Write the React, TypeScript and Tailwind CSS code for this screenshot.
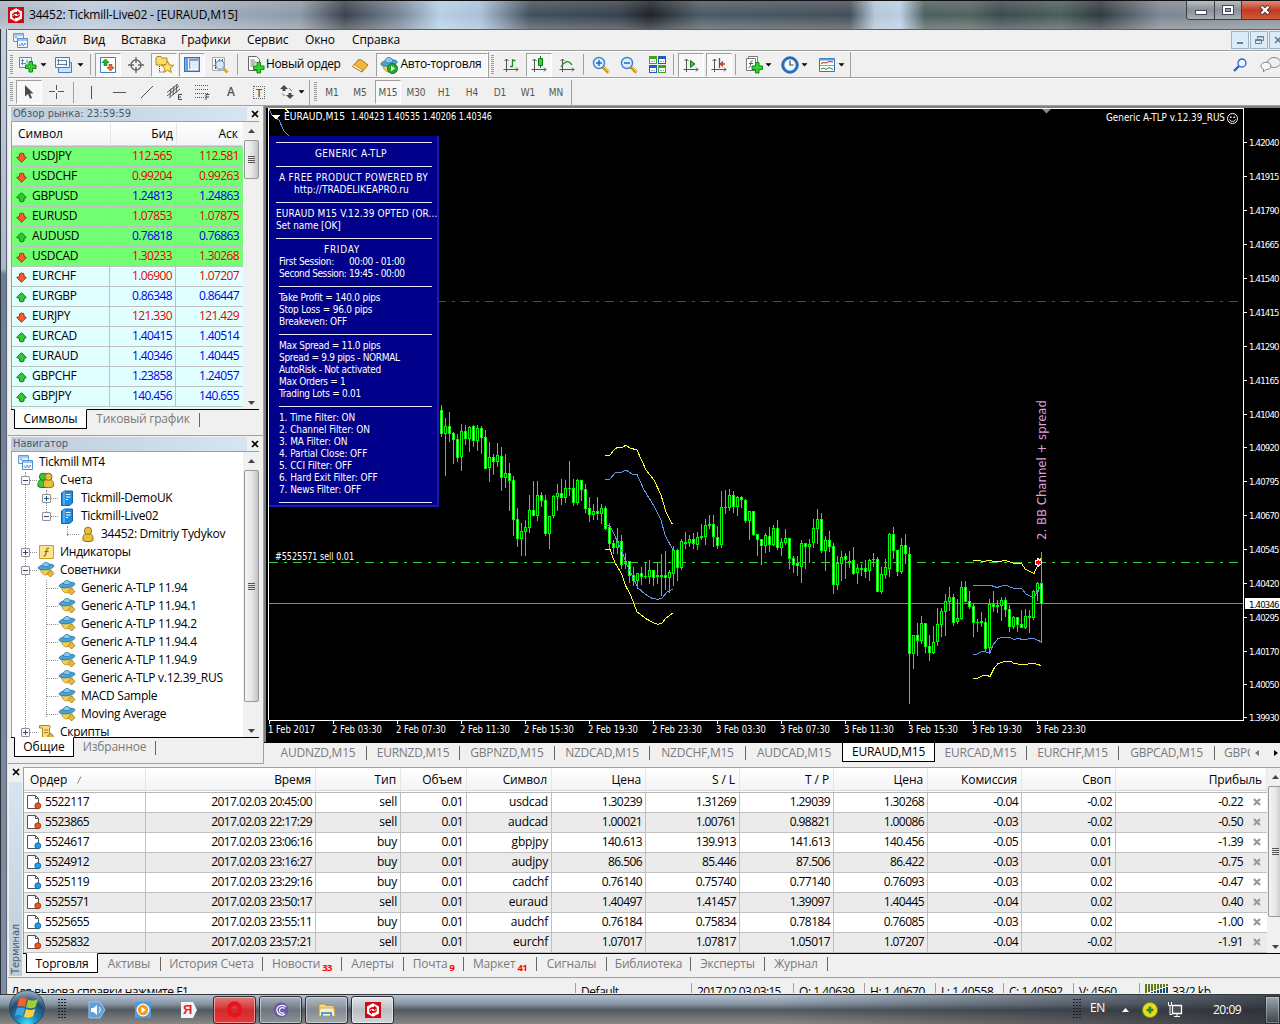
import type { ReactNode } from 'react';
import clsx from 'clsx';

/* ---------- data ---------- */

const quotes: [string, 'up' | 'down', string, string][] = [
  ['USDJPY', 'down', '112.565', '112.581'],
  ['USDCHF', 'down', '0.99204', '0.99263'],
  ['GBPUSD', 'up', '1.24813', '1.24863'],
  ['EURUSD', 'down', '1.07853', '1.07875'],
  ['AUDUSD', 'up', '0.76818', '0.76863'],
  ['USDCAD', 'down', '1.30233', '1.30268'],
  ['EURCHF', 'down', '1.06900', '1.07207'],
  ['EURGBP', 'up', '0.86348', '0.86447'],
  ['EURJPY', 'down', '121.330', '121.429'],
  ['EURCAD', 'up', '1.40415', '1.40514'],
  ['EURAUD', 'up', '1.40346', '1.40445'],
  ['GBPCHF', 'up', '1.23858', '1.24057'],
  ['GBPJPY', 'up', '140.456', '140.655'],
];

const orders = [
  ['5522117', '2017.02.03 20:45:00', 'sell', '0.01', 'usdcad', '1.30239', '1.31269', '1.29039', '1.30268', '-0.04', '-0.02', '-0.22'],
  ['5523865', '2017.02.03 22:17:29', 'sell', '0.01', 'audcad', '1.00021', '1.00761', '0.98821', '1.00086', '-0.03', '-0.02', '-0.50'],
  ['5524617', '2017.02.03 23:06:16', 'buy', '0.01', 'gbpjpy', '140.613', '139.913', '141.613', '140.456', '-0.05', '0.01', '-1.39'],
  ['5524912', '2017.02.03 23:16:27', 'buy', '0.01', 'audjpy', '86.506', '85.446', '87.506', '86.422', '-0.03', '0.01', '-0.75'],
  ['5525119', '2017.02.03 23:29:16', 'buy', '0.01', 'cadchf', '0.76140', '0.75740', '0.77140', '0.76093', '-0.03', '0.02', '-0.47'],
  ['5525571', '2017.02.03 23:50:17', 'sell', '0.01', 'euraud', '1.40497', '1.41457', '1.39097', '1.40445', '-0.04', '0.02', '0.40'],
  ['5525655', '2017.02.03 23:55:11', 'buy', '0.01', 'audchf', '0.76184', '0.75834', '0.78184', '0.76085', '-0.03', '0.02', '-1.00'],
  ['5525832', '2017.02.03 23:57:21', 'sell', '0.01', 'eurchf', '1.07017', '1.07817', '1.05017', '1.07207', '-0.04', '-0.02', '-1.91'],
];

const orderCols = ['Ордер', 'Время', 'Тип', 'Объем', 'Символ', 'Цена', 'S / L', 'T / P', 'Цена', 'Комиссия', 'Своп', 'Прибыль'];
const orderGrid = 'grid grid-cols-[122px_170px_85px_66px_85px_94px_94px_94px_94px_94px_94px_151px]';

// [high, open, close, low] in thirds of a pixel below the block's y0
const blocks: { x: number; y0: number; bars: number[][] }[] = [
  {
    x: 441,
    y0: 390,
    bars: [
      [45, 60, 132, 141], [84, 132, 108, 258], [66, 108, 132, 156], [126, 129, 150, 222], [132, 147, 204, 216],
      [102, 201, 123, 243], [105, 123, 147, 165], [108, 147, 111, 186], [105, 108, 153, 171], [105, 153, 114, 183],
      [108, 114, 144, 192], [120, 141, 237, 237], [156, 234, 201, 276], [192, 201, 216, 255], [159, 216, 195, 231],
      [171, 198, 264, 303], [192, 264, 249, 294], [219, 249, 273, 363], [258, 270, 390, 438], [354, 387, 447, 471],
      [399, 447, 423, 498], [390, 426, 411, 498], [315, 414, 360, 429], [273, 360, 378, 378], [273, 378, 315, 393],
      [306, 315, 333, 351], [315, 330, 432, 438], [378, 432, 378, 477], [315, 378, 318, 384], [282, 321, 309, 363],
      [267, 309, 324, 345], [270, 324, 294, 339], [213, 294, 297, 318], [267, 294, 339, 348], [267, 339, 270, 345],
      [270, 270, 300, 333], [282, 297, 357, 369], [321, 354, 375, 396], [342, 375, 363, 390], [321, 363, 372, 390],
      [342, 372, 354, 402], [348, 354, 417, 420], [399, 411, 462, 480], [450, 459, 474, 492], [414, 474, 453, 492],
      [435, 453, 525, 537], [489, 522, 513, 537], [513, 513, 558, 579], [531, 555, 573, 588], [549, 573, 549, 597],
      [531, 549, 561, 585], [516, 558, 561, 567], [510, 561, 540, 582], [540, 540, 564, 588], [519, 555, 561, 582],
      [492, 555, 561, 618], [483, 555, 564, 600], [540, 564, 546, 609], [468, 552, 480, 588], [477, 480, 534, 573],
    ],
  },
  {
    x: 681,
    y0: 460,
    bars: [
      [237, 324, 243, 330], [216, 246, 252, 267], [225, 249, 237, 261], [219, 237, 252, 267], [216, 255, 231, 270],
      [192, 228, 234, 240], [177, 231, 195, 255], [165, 192, 198, 207], [165, 192, 231, 261], [198, 231, 258, 267],
      [93, 255, 141, 264], [90, 141, 144, 162], [87, 144, 105, 153], [93, 105, 141, 159], [108, 141, 111, 168],
      [108, 111, 120, 144], [117, 120, 183, 189], [153, 183, 153, 240], [153, 153, 225, 228], [222, 222, 240, 288],
      [237, 237, 258, 315], [219, 258, 225, 279], [201, 228, 255, 276], [195, 255, 204, 258], [180, 204, 264, 270],
      [234, 264, 246, 288], [207, 249, 234, 255], [234, 234, 297, 327], [288, 294, 315, 339], [288, 309, 318, 348],
      [240, 321, 249, 369], [249, 249, 261, 327], [237, 261, 252, 309], [177, 249, 204, 264], [147, 207, 177, 252],
      [159, 177, 273, 279], [228, 273, 240, 333], [213, 240, 261, 276], [249, 258, 375, 402], [288, 375, 309, 390],
      [273, 312, 291, 363], [279, 288, 300, 357], [273, 303, 309, 324], [261, 300, 342, 345], [312, 339, 324, 372],
      [312, 324, 330, 348], [300, 324, 336, 354], [297, 333, 300, 363], [279, 297, 300, 321], [291, 297, 396, 396],
      [321, 396, 342, 402], [297, 345, 321, 357], [219, 327, 222, 351], [201, 222, 273, 297], [270, 270, 336, 348],
      [234, 336, 255, 342], [222, 255, 282, 312], [261, 282, 582, 732],
    ],
  },
  {
    x: 913,
    y0: 380,
    bars: [
      [765, 822, 765, 867], [729, 765, 783, 828], [708, 783, 729, 792], [729, 729, 801, 819], [765, 798, 819, 843],
      [738, 819, 786, 822], [684, 786, 732, 798], [684, 735, 693, 771], [642, 696, 663, 768], [621, 666, 651, 693],
      [642, 651, 729, 738], [657, 726, 714, 732], [603, 717, 621, 720], [603, 621, 666, 666], [633, 663, 681, 687],
      [669, 678, 729, 771], [717, 726, 729, 756], [696, 723, 729, 741], [714, 726, 807, 813], [657, 804, 672, 822],
      [633, 672, 681, 696], [660, 675, 681, 699], [651, 678, 660, 723], [651, 660, 690, 711], [675, 687, 741, 756],
      [708, 741, 711, 747], [711, 711, 735, 756], [690, 732, 744, 744], [687, 744, 708, 747], [690, 708, 714, 759],
      [630, 714, 633, 720], [606, 636, 609, 663], [516, 609, 672, 789],
    ],
  },
];

const bands = [
  ['#ffff33', '605,455 610,455 614,450 618,447 622,448 626,445 630,448 637,450 646,470 654,480 661,495 666,512 672.5,524.5'],
  ['#6495ed', '605,479 610,479 615,473 622,472 626,470 632,474 637,474.500 644,490 654,506 661,520 665,535 673,550'],
  ['#6495ed', '605,525.500 610,526 617,540.500 621.500,550.500 626.500,564 632,575 638,588 645,594 651.500,598 658,599.500 662,598 667,592 673,589'],
  ['#ffff33', '605,549 610,549.500 615,563 621.500,573.500 626,586.500 631,596 637,612 646.500,619 654,623 658,624.500 662,623 666,618 673,613'],
  ['#ffff33', '973,560.500 980,560.500 982,561.500 990,560.500 997,562 1005,560.500 1013,563 1022,564 1025,569 1034,573.500 1037,567 1041,558'],
  ['#6495ed', '973,585.500 991,585.500 997,587.500 1005,585 1013,588 1022,589 1026,594 1034,598 1037,592 1041,586'],
  ['#6495ed', '973,654.500 977,654 982,651.500 990,652.500 993,645 998,638.500 1002,637.500 1010,637.500 1014,639.500 1018,638.500 1023,639.500 1034,638.500 1038,640.500 1041,641.500'],
  ['#ffff33', '973,678.500 977,678.500 982,676 987,675.500 990,676.500 994,668.500 998,663.500 1005,661.500 1011,661.500 1014,663.500 1022,664.500 1034,663.500 1038,664.500 1041,665.500'],
  ['#6495ed', '269,109 272,115 279,120 284,131 289,136'],
  ['#ffff33', '285,109 289,112'],
];

const prices: [string, number][] = [
  ['1.42040', 142], ['1.41915', 176], ['1.41790', 210], ['1.41665', 244], ['1.41540', 278], ['1.41415', 312],
  ['1.41290', 346], ['1.41165', 380], ['1.41040', 414], ['1.40920', 447], ['1.40795', 481], ['1.40670', 515],
  ['1.40545', 549], ['1.40420', 583], ['1.40295', 617], ['1.40170', 651], ['1.40050', 684], ['1.39930', 717],
];

const times = [
  '1 Feb 2017', '2 Feb 03:30', '2 Feb 07:30', '2 Feb 11:30', '2 Feb 15:30', '2 Feb 19:30', '2 Feb 23:30',
  '3 Feb 03:30', '3 Feb 07:30', '3 Feb 11:30', '3 Feb 15:30', '3 Feb 19:30', '3 Feb 23:30',
];

/* ---------- small pieces ---------- */

function Svg({ w = 18, h = 18, children, className }: { w?: number; h?: number; children: ReactNode; className?: string }) {
  return (
    <svg width={w} height={h} viewBox={`0 0 ${w} ${h}`} className={clsx('shrink-0', className)} fill="none">
      {children}
    </svg>
  );
}

const Plus = ({ x, y }: { x: number; y: number }) => (
  <path
    transform={`translate(${x} ${y})`}
    d="M4 .5h3.500v3.500h3.500v3.500h-3.500v3.500H4V7.500H.5V4H4z"
    fill="#2fd62f"
    stroke="#0a8a12"
  />
);

const Axes = () => <path d="M4.500 3v13M1.500 13.500H16M2.500 5l2-2 2 2M14 11.500l2 2-2 2" stroke="#555" />;

const ExpertHat = () => (
  <Svg>
    <path d="M3 9c0 4 2.500 7 6 7s5-2 6-6z" fill="#f2cf52" stroke="#b78b1c" strokeWidth=".8" />
    <ellipse cx="9" cy="7" rx="8.300" ry="3" transform="rotate(-8 9 7)" fill="#4aa3d8" stroke="#2b78ab" strokeWidth=".8" />
    <path d="M5 6c0-3 1.500-4.500 4-4.500S12.500 3 13 5.500C11 7 7 7.500 5 6z" fill="#86cbee" stroke="#2b78ab" strokeWidth=".8" />
  </Svg>
);

const ExpertIcon = () => (
  <Svg>
    <path d="M3.500 8c0 3 2.500 6 5 6s5-2 6-5z" fill="#f2cf52" stroke="#b78b1c" strokeWidth=".8" />
    <ellipse cx="9" cy="6" rx="8" ry="2.700" transform="rotate(-8 9 6)" fill="#4aa3d8" stroke="#2b78ab" strokeWidth=".8" />
    <path d="M5.500 5c0-2.500 1.500-3.500 3.500-3.500S12 2.500 12.500 4.500C11 6 7 6 5.500 5z" fill="#86cbee" stroke="#2b78ab" strokeWidth=".8" />
    <path d="M13.500 9l3.500 3.500-3.500 3.500-3.500-3.500z" fill="#e7b93a" stroke="#9a7315" strokeWidth=".8" />
  </Svg>
);

const ChartsIcon = () => (
  <Svg w={15} h={15}>
    <path d="M.5.5h10v8H.5z" fill="#e9f3fd" stroke="#5b9bdc" />
    <path d="M.5 2h10" stroke="#5b9bdc" />
    <path d="M4.500 5.500h10v9h-10z" fill="#f4f9ff" stroke="#4a8ed6" />
    <path d="M4.500 7h10" stroke="#4a8ed6" />
    <path d="M6 11l1.500 2 1.500-3 1.500 3L12 10l1 1.500M2 5l1-1.500L4 5" stroke="#4a8ed6" strokeWidth=".9" />
  </Svg>
);

// white hexagon with two opposed arrows cut out of it
const BrandIcon = () => (
  <Svg w={16} h={16}>
    <path d="M0 0h16v16H0z" fill="#cf0a14" />
    <path d="M8 1.200l6 3.400v6.800l-6 3.400-6-3.400V4.600z" fill="#fff" />
    <path d="M3.800 9.300C3.600 6.300 5.800 4.700 9 5V3.300l3.200 2.900L9 8.500V7.200C6.800 6.900 5.300 7.400 3.800 9.300z" fill="#cf0a14" />
    <path d="M12.200 6.700c.2 3-2 4.600-5.200 4.300v1.700L3.800 9.800 7 7.500v1.300c2.200.3 3.700-.2 5.200-2.100z" fill="#cf0a14" />
  </Svg>
);

const Drop = ({ className = 'ml-[3px]' }: { className?: string }) => (
  <Svg w={7} h={4} className={className}>
    <path d="M.5.300h6L3.500 3.500z" fill="#000" />
  </Svg>
);

const Grip = () => (
  <div className="h-5 w-[3px] mx-0.5 shrink-0 bg-[repeating-linear-gradient(#9a9a9a_0_1px,#f0f0f0_1px_2px)]" />
);

const Sep = ({ className = 'mx-[3px]' }: { className?: string }) => (
  <div className={clsx('h-[21px] w-px shrink-0 bg-[#a0a0a0]', className)} />
);

function Tool({ children, pressed, className = 'w-[26px]' }: { children?: ReactNode; pressed?: boolean; className?: string }) {
  return (
    <div
      className={clsx(
        'h-6 shrink-0 flex items-center justify-center',
        pressed && 'border border-[#a0a0a0] border-r-white border-b-white bg-[#f7f7f7]',
        className,
      )}
    >
      {children}
    </div>
  );
}

const CloseX = ({ color = '#000', weight = 1.7 }: { color?: string; weight?: number }) => (
  <Svg w={8} h={8}>
    <path d="M1 1l6 6M7 1l-6 6" stroke={color} strokeWidth={weight} />
  </Svg>
);

const Arrow = ({ dir }: { dir: 'up' | 'down' }) => (
  <Svg w={11} h={11}>
    {dir === 'up' ? (
      <path d="M5.500.7L10.300 5.500 8 6.500v2.500L5.500 10 3.500 9V6.500L.7 5.500z" fill="#35c535" stroke="#0b7a16" />
    ) : (
      <path d="M5.500 10.300L.7 5.500 3.500 4.500V2L5.500 1 8 2v2.500l2.300 1z" fill="#ff5a2a" stroke="#a82a0a" />
    )}
  </Svg>
);

function Scrollbar({ thumb }: { thumb: string }) {
  return (
    <div className="w-4 shrink-0 flex flex-col items-center bg-[#f0f0f0]">
      <Svg w={7} h={4} className="mt-[7px]"><path d="M0 4l3.500-4L7 4z" fill="#444" /></Svg>
      <div className={clsx('w-[15px] mt-[7px] shrink-0 rounded-[2px] border border-[#979797] bg-linear-to-r from-[#f4f4f4] via-[#e6e6e8] to-[#c4c4c8] flex flex-col items-center justify-center gap-px', thumb)}>
        {[0, 1, 2, 3].map((i) => <div key={i} className="w-[7px] h-px bg-[#555]" />)}
      </div>
      <div className="flex-1" />
      <Svg w={7} h={4} className="mb-1"><path d="M0 0l3.500 4L7 0z" fill="#444" /></Svg>
    </div>
  );
}

function PanelHeader({ title }: { title: string }) {
  return (
    <div className="h-[14px] ml-[3px] mr-px flex items-center shrink-0">
      <div className="w-[236px] h-[14px] pl-0.5 text-[11px] leading-[13px] text-[#4a5a6b] font-['DejaVu_Sans_Condensed','DejaVu_Sans',sans-serif] bg-linear-to-r from-[#bfcddb] to-[#d7e4f2]">
        {title}
      </div>
      <div className="ml-1"><CloseX /></div>
    </div>
  );
}

/* ---------- window chrome ---------- */

function TitleBar() {
  return (
    <div className="relative h-[29px] shrink-0 flex items-center pl-2 border-t border-[#111] overflow-hidden bg-[linear-gradient(90deg,#a9b4c2_0,#bccbdd_90px,#a3b0bf_200px,#8c98a6_300px,#3b424b_345px,#788798_400px,#b5cfe6_440px,#a9c0d8_480px,#43505c_530px,#38424c_620px,#1d2329_650px,#4d5a63_700px,#454f58_850px,#b3c7d9_875px,#b9cee2_900px,#4d5f60_925px,#52635f_970px,#3d4a50_1000px,#4b5f5a_1060px,#303a40_1100px,#7d8791_1160px,#8a929a_1280px)]">
      <div className="absolute inset-0 bg-linear-to-b from-white/15 via-transparent to-white/25" />
      <div className="relative flex items-center gap-[5px]">
        <BrandIcon />
        <span className="text-[12px] text-black tracking-[-.18px]">34452: Tickmill-Live02 - [EURAUD,M15]</span>
      </div>
      <div className="absolute left-[1186px] top-0 flex h-[19px] w-[100px] rounded-bl-[4px] border border-t-0 border-[#3a3f46] overflow-hidden">
        <div className="w-[29px] border-r border-[#3a3f46] bg-linear-to-b from-[#b9bec4] via-[#8a9097] to-[#a9afb5] flex items-center justify-center">
          <div className="w-3 h-[5px] mt-1 bg-white border border-[#444a55]" />
        </div>
        <div className="w-[27px] border-r border-[#3a3f46] bg-linear-to-b from-[#b9bec4] via-[#8a9097] to-[#a9afb5] flex items-center justify-center">
          <div className="w-3 h-[10px] bg-white border border-[#444a55] flex items-center justify-center">
            <div className="w-[6px] h-1 border border-[#444a55] bg-[#9aa0a7]" />
          </div>
        </div>
        <div className="w-[44px] pl-[3px] bg-linear-to-b from-[#dd8a78] via-[#c23a20] to-[#cd5a3a] flex items-center justify-center">
          <Svg w={12} h={10}>
            <path d="M2 1l8 8M10 1l-8 8" stroke="#4a2a2a" strokeWidth="4" />
            <path d="M2.500 1.500l7 7M9.500 1.500l-7 7" stroke="#fff" strokeWidth="2.400" />
          </Svg>
        </div>
      </div>
    </div>
  );
}

function MenuBar() {
  const btn = 'w-[18px] h-[18px] border border-[#9db4c8] bg-[#dcebf8] flex items-center justify-center shrink-0';
  return (
    <div className="h-[21px] shrink-0 flex items-center bg-[#f0f0f0] border-b border-[#a0a0a0] text-[12px] tracking-[-.1px]">
      <div className="ml-[5px]"><ChartsIcon /></div>
      <div className="ml-2 w-[47px]">Файл</div>
      <div className="w-[38px]">Вид</div>
      <div className="w-[60px]">Вставка</div>
      <div className="w-[66px]">Графики</div>
      <div className="w-[58px]">Сервис</div>
      <div className="w-[47px]">Окно</div>
      <div className="w-[60px]">Справка</div>
      <div className="flex-1" />
      <div className="flex gap-px w-[49px] overflow-hidden">
        <div className={btn}><div className="w-[6px] h-0.5 mt-[6px] bg-[#6a7f94]" /></div>
        <div className={btn}>
          <Svg w={9} h={9}><path d="M2.500 2.500v-2h6v4h-2M.5 3.500h6v4h-6zM.5 4.500h6M2.500 1h6" stroke="#6a7f94" /></Svg>
        </div>
        <div className={btn}><CloseX color="#6a7f94" /></div>
      </div>
    </div>
  );
}

function MainToolbar() {
  return (
    <div className="h-[27px] shrink-0 flex items-center bg-[#f0f0f0] border-t border-t-white border-b border-b-[#a0a0a0]">
      <Grip />
      <Tool className="w-6 ml-px">
        <Svg>
          <path d="M.5 1.500h12v10H.5z" fill="#eef6ff" stroke="#4a8ed6" />
          <path d="M3.500 3v6M2 4.500h3M8 3.500v4M2 7.500h5" stroke="#6d89a5" />
          <Plus x={6} y={5} />
        </Svg>
      </Tool>
      <Drop className="ml-0" />
      <Tool className="w-6 ml-[5px]">
        <Svg>
          <path d="M3.500 6.500h13v10h-13z" fill="#cde2f6" stroke="#3f7fc4" />
          <path d="M.5 1.500h14v10H.5z" fill="#f4f9ff" stroke="#3f7fc4" />
          <path d="M3.500 3v6M2 4.500h10M2 8.500h10M11.500 4v6" stroke="#5a7c9e" />
        </Svg>
      </Tool>
      <Drop className="ml-[1px]" />
      <Sep className="ml-[6px] mr-1" />
      <div className="flex gap-0.5">
        <Tool pressed>
          <Svg w={16} h={16}>
            <path d="M.5.5h15v15H.5z" fill="#fff" stroke="#3f7fc4" />
            <path d="M5.500 2L9 5.500H7v3H4v-3H2z" fill="#2db52d" stroke="#0b7a16" strokeWidth=".7" />
            <path d="M10.500 14L7 10.500h2v-3h3v3h2z" fill="#ff6a3a" stroke="#a82a0a" strokeWidth=".7" />
          </Svg>
        </Tool>
        <Tool>
          <Svg w={16} h={16}><circle cx="8" cy="8" r="5" stroke="#666" strokeWidth="1.400" /><path d="M8 0v6M8 10v6M0 8h6M10 8h6" stroke="#666" strokeWidth="1.400" /></Svg>
        </Tool>
        <Tool pressed>
          <Svg w={19} h={19}>
            <path d="M1 3l1-1.500h4L7 3h5v7H1z" fill="#f8dc6a" stroke="#b08a20" />
            <path d="M4.500 11v6h4" stroke="#333" strokeDasharray="1 1" />
            <path d="M12.500 6l1.800 4 4.200.4-3.200 2.800 1 4.300-3.800-2.300-3.800 2.300 1-4.300L6.500 10.400l4.200-.4z" fill="#ffe27a" stroke="#b58412" />
          </Svg>
        </Tool>
        <Tool pressed>
          <Svg w={16} h={15}>
            <path d="M.7.7h14.600v13.600H.7z" fill="#fff" stroke="#2f74bd" strokeWidth="1.400" />
            <path d="M1.500 1.500h2.500v12H1.500z" fill="#5a9bdc" />
            <path d="M5 3h9M5 5h1.500M5 7h1.500M5 9h1.500M5 11h1.500" stroke="#223a7a" />
            <path d="M7.500 5H14M7.500 7H14M7.500 9H14M7.500 11H14" stroke="#c9d6e8" />
          </Svg>
        </Tool>
        <Tool>
          <Svg>
            <path d="M1.500 1.500h12v13h-12z" fill="#fafafa" stroke="#aaa" />
            <path d="M4.500 3v10M4.500 9.500H2.500M8.500 3v3M11.500 3v2" stroke="#456" />
            <circle cx="9" cy="9" r="4.300" fill="#cfe6f8cc" stroke="#6d9cc4" strokeWidth="1.300" />
            <path d="M12.500 12.500l4 4" stroke="#d8a32a" strokeWidth="2.800" />
          </Svg>
        </Tool>
      </div>
      <Sep className="ml-[4px] mr-[9px]" />
      <Svg>
        <path d="M1.500.5h8l3 3v11h-11z" fill="#fff" stroke="#666" />
        <path d="M3.500 4h4M3.500 6h6M3.500 8h5M3.500 10h3" stroke="#777" />
        <Plus x={6} y={6} />
      </Svg>
      <span className="ml-px w-[76px] text-[12px] -mt-0.5 whitespace-nowrap tracking-[-.35px]">Новый ордер</span>
      <Tool className="w-6 ml-[6px]">
        <Svg>
          <path d="M1.500 10.500l6-7 3 .5 6.500 5-6 7z" fill="#f0b93a" stroke="#a8741a" />
          <path d="M1.500 10.500l9.500 5.500V13.500L3 8.500z" fill="#fff2c8" stroke="#a8741a" strokeWidth=".7" />
        </Svg>
      </Tool>
      <Tool pressed className="w-[112px] ml-1 gap-[3px]">
        <div className="relative">
          <ExpertHat />
          <div className="absolute left-[7px] top-[7px]">
            <Svg w={11} h={11}><circle cx="5.500" cy="5.500" r="5" fill="#1fae2c" stroke="#0c7a18" /><path d="M4 2.800l4 2.700-4 2.700z" fill="#fff" /></Svg>
          </div>
        </div>
        <span className="w-[84px] text-[12px] -mt-0.5 whitespace-nowrap tracking-[-.25px]">Авто-торговля</span>
      </Tool>
      <div className="w-px h-[25px] bg-[#a0a0a0]" />
      <Grip />
      <div className="flex gap-0.5 ml-0.5">
        <Tool><Svg><Axes /><path d="M10.500 3v8M10.500 4.500h3M8 10.500h2.500" stroke="#1f8f2a" strokeWidth="1.300" /></Svg></Tool>
        <Tool pressed><Svg><Axes /><path d="M10.500 0v12" stroke="#0c7a18" /><path d="M8.500 2.500h4v7h-4z" fill="#2fd62f" stroke="#0c7a18" /></Svg></Tool>
        <Tool><Svg><Axes /><path d="M3 11c3-5 7-8 11-2" stroke="#1f8f2a" strokeWidth="1.300" /></Svg></Tool>
      </div>
      <Sep className="ml-[3px] mr-[4px]" />
      <div className="flex gap-0.5">
        {['in', 'out'].map((kind) => (
          <Tool key={kind}>
            <Svg>
              <path d="M11 11l5.500 5.500" stroke="#c99a22" strokeWidth="3.200" />
              <path d="M11.500 10.500l5.500 5.500" stroke="#f5dc7a" strokeWidth="1" />
              <circle cx="7" cy="7" r="5.500" fill="#dbeeff" stroke="#3b7fce" strokeWidth="1.400" />
              <path d={kind === 'in' ? 'M4 7h6M7 4v6' : 'M4 7h6'} stroke="#2568b8" strokeWidth="1.500" />
            </Svg>
          </Tool>
        ))}
        <Tool>
          <Svg w={17} h={17}>
            <path d="M0 0h8v8H0zM9 9h8v8H9z" fill="#3aa81a" />
            <path d="M9 0h8v8H9zM0 9h8v8H0z" fill="#2358c8" />
            <path d="M1 3h6v4H1zM10 3h6v4h-6zM1 12h6v4H1zM10 12h6v4h-6z" fill="#fff" />
            <path d="M2 5.500h4M11 5.500h4M2 14.500h4M11 14.500h4" stroke="#99a" strokeDasharray="2 1" />
          </Svg>
        </Tool>
      </div>
      <Sep className="ml-[3px] mr-1" />
      <div className="flex gap-0.5">
        <Tool pressed><Svg><Axes /><path d="M8.500 4.500v7L13 8z" fill="#2fc43a" stroke="#0c7a18" /></Svg></Tool>
        <Tool pressed><Svg><Axes /><path d="M9.500 2v10" stroke="#1a5fa8" strokeWidth="1.300" /><path d="M15 8h-4M13 5.500L10.500 8l2.500 2.500" stroke="#c23a10" strokeWidth="1.300" /></Svg></Tool>
      </div>
      <Sep className="ml-[3px] mr-[9px]" />
      <Svg>
        <path d="M3.500.5h9v13h-9z" fill="#fff" stroke="#777" />
        <path d="M1.500 2.500h9v12h-9z" fill="#fff" stroke="#777" />
        <path d="M8 5c-2-1-2 1-2.300 3S5 12 3.500 11.500M4 7.500h4" stroke="#555" />
        <Plus x={6.500} y={6} />
      </Svg>
      <Drop className="ml-0.5" />
      <Svg className="ml-[9px]">
        <circle cx="9" cy="9" r="7" fill="#f6fbff" stroke="#2374c8" strokeWidth="2.600" />
        <circle cx="9" cy="9" r="8.300" stroke="#174f8f" strokeWidth=".7" />
        <path d="M9 4.500V9h3.500" stroke="#444" strokeWidth="1.200" />
      </Svg>
      <Drop className="ml-0.5" />
      <Svg className="ml-[10px]">
        <path d="M1.500 2.500h15v13h-15z" fill="#fff" stroke="#2f74bd" />
        <path d="M1.500 3.500h15" stroke="#5a9bdc" strokeWidth="2" />
        <path d="M2 9.500h14" stroke="#7aa9d8" />
        <path d="M3 7.500l3-1 2 .5 3-1.500 4 .5" stroke="#a82a0a" />
        <path d="M3 13l3-1 2 1.500 3-2 4 2" stroke="#1f8f2a" />
      </Svg>
      <Drop className="ml-0.5" />
      <div className="w-px h-[25px] bg-[#a0a0a0] ml-[5px]" />
      <div className="flex-1" />
      <Svg w={14} h={14}>
        <circle cx="9" cy="5" r="4" fill="#eef5ff" stroke="#2b62d0" strokeWidth="1.300" />
        <path d="M6 8l-5 5" stroke="#2b62d0" strokeWidth="2.400" />
      </Svg>
      <Svg w={20} h={18} className="ml-[13px]">
        <ellipse cx="14" cy="6.500" rx="6.500" ry="5" fill="#eee" stroke="#888" />
        <path d="M1 10c0-5 10-5 10 0 0 3-3 3.500-5 3.500L3.500 16v-3C2 12.500 1 11.500 1 10z" fill="#f7f7f7" stroke="#888" />
      </Svg>
    </div>
  );
}

function LineToolbar() {
  return (
    <div className="h-[28px] shrink-0 flex items-center bg-[#f0f0f0] border-t border-t-white border-b border-b-[#a0a0a0] text-[#555]">
      <Grip />
      <Tool pressed className="w-[26px] ml-px"><Svg w={14} h={16}><path d="M3 1l8.500 8.500H8l2 4.500-2 .8-2-4.800L3 12.500z" fill="#4a4a4a" /></Svg></Tool>
      <Tool className="w-[26px] ml-0.5"><Svg w={16} h={16}><path d="M7.500 1v5M7.500 9v6M0 7.500h6M9 7.500h6" stroke="#555" /></Svg></Tool>
      <Sep className="ml-[3px] mr-[4px]" />
      <div className="flex gap-0.5">
        <Tool><div className="w-px h-[13px] bg-[#555]" /></Tool>
        <Tool><div className="w-[13px] h-px bg-[#555]" /></Tool>
        <Tool><Svg w={14} h={14}><path d="M1 13L13 1" stroke="#555" /></Svg></Tool>
        <Tool>
          <Svg>
            <path d="M1 13L13 3M1 9.500L12 1M3 15l11-9M5 5.500l-1 8M8 3L7 12M11 1l-1 9" stroke="#555" />
            <path d="M16 11.500h-3.500v5H16M12.500 14H15" stroke="#444" />
          </Svg>
        </Tool>
        <Tool>
          <Svg>
            <path d="M1 2.500h14M1 6.500h14M1 10.500h14M1 14.500h9" stroke="#555" strokeDasharray="1 1" />
            <path d="M15.500 11.500H12v5.500M12 14h3" stroke="#444" />
          </Svg>
        </Tool>
        <Tool><span className="text-[12px] font-semibold">A</span></Tool>
        <Tool><div className="w-3 h-[13px] border border-dotted border-[#666] text-[11px] leading-[11px] font-semibold text-center">T</div></Tool>
        <Tool>
          <Svg w={14} h={14}>
            <path d="M4 0l4 4H5.500v2h-3V4H0zM10 14l-4-4h2.500V8h3v2H14z" fill="#4a4a4a" />
            <path d="M2.500 8.500l2 2.500M9 3l3 3" stroke="#777" />
          </Svg>
        </Tool>
      </div>
      <Drop className="-ml-0.5" />
      <div className="w-px h-[25px] bg-[#a0a0a0] ml-1 mr-[2px]" />
      <Grip />
      <div className="flex gap-0.5 text-[10px] font-['DejaVu_Sans_Condensed','DejaVu_Sans',sans-serif] tracking-[-.1px]">
        {['M1', 'M5', 'M15', 'M30', 'H1', 'H4', 'D1', 'W1', 'MN'].map((tf) => (
          <Tool key={tf} pressed={tf === 'M15'}>{tf}</Tool>
        ))}
      </div>
      <div className="w-px h-[25px] bg-[#a0a0a0] ml-0.5" />
    </div>
  );
}

/* ---------- left panels ---------- */

function PanelTabs({ active, other, aw, ow }: { active: string; other: string; aw: string; ow: string }) {
  return (
    <div className="h-[20px] ml-[3px] mr-1 flex border-t border-black shrink-0 text-[12px] leading-[18px]">
      <div className={clsx('ml-[3px] -mt-px h-[20px] bg-white border border-black border-t-white text-center', aw)}>{active}</div>
      <div className={clsx('text-[#7a7a7a] text-center tracking-[-.2px]', ow)}>{other}</div>
      <div className="w-px h-[14px] mt-[3px] bg-[#666]" />
    </div>
  );
}

function MarketWatch() {
  return (
    <div className="h-[330px] shrink-0 flex flex-col border-b border-[#a0a0a0] pt-px">
      <PanelHeader title="Обзор рынка: 23:59:59" />
      <div className="h-[288px] ml-[3px] mr-1 flex border-t border-l border-[#a0a0a0] overflow-hidden bg-white">
        <div className="w-[232px] text-[12px]">
          <div className="h-[24px] grid grid-cols-[98px_66px_67px] items-center bg-linear-to-b from-white to-[#f3f4f6] border-b border-[#d5d5d5]">
            <div className="pl-[6px]">Символ</div>
            <div className="text-right pr-[3px] border-l border-[#e4e6e8] leading-[22px]">Бид</div>
            <div className="text-right pr-[5px] border-l border-[#e4e6e8] leading-[22px]">Аск</div>
          </div>
          <div className="h-px bg-[#b8b8b8] mr-px" />
          {quotes.map(([symbol, dir, bid, ask], i) => (
            <div
              key={symbol}
              className={clsx(
                'h-5 w-[231px] grid grid-cols-[98px_66px_67px] border-b border-[#c0c0c0] leading-[18px]',
                i < 6 ? 'bg-[#73ff73]' : 'bg-[#e0ffff]',
              )}
            >
              <div className="flex items-start gap-[5px] pl-1 border-r border-[#c0c0c0] tracking-[-.3px]">
                <div className="pt-[5px]"><Arrow dir={dir} /></div>
                {symbol}
              </div>
              {[bid, ask].map((v, k) => (
                <div
                  key={k}
                  className={clsx(
                    'text-right tracking-[-.6px]',
                    k === 0 ? 'border-r border-[#c0c0c0] pr-[3px]' : 'pr-1',
                    dir === 'up' ? 'text-[#0000e6]' : 'text-[#e60000]',
                  )}
                >
                  {v}
                </div>
              ))}
            </div>
          ))}
          <div className="h-1 w-[231px] bg-[#e0ffff]" />
        </div>
        <Scrollbar thumb="h-[39px]" />
      </div>
      <PanelTabs active="Символы" other="Тиковый график" aw="w-[73px]" ow="w-[112px]" />
    </div>
  );
}

const Person = ({ x = 0, fill = '#e8bf3a', edge = '#92700f' }: { x?: number; fill?: string; edge?: string }) => (
  <g transform={`translate(${x} 0)`} fill={fill} stroke={edge}>
    <path d="M1 14.500c-.5-4 1-7 3-7h3.500c2.500 0 4 3 3.500 7-2 1.500-8 1.500-10 0z" />
    <circle cx="6" cy="4.800" r="3.600" />
  </g>
);

const ServerIcon = () => (
  <Svg w={16} h={16}>
    <path d="M2.500 3l3-2h8v12l-3 2.500h-8z" fill="#1d8be0" stroke="#0f62ad" />
    <path d="M5 1.500v13.500" stroke="#8fd0ff" />
    <path d="M7 4.500h4.500M7 7h4.500M7 9.500h2" stroke="#fff" strokeWidth="1.200" />
  </Svg>
);

function Expander({ open }: { open: boolean }) {
  return (
    <div className="w-[9px] h-[9px] shrink-0 border border-[#919191] rounded-[1px] bg-[#fafafa] flex items-center justify-center">
      <Svg w={7} h={7}><path d={open ? 'M1 3.500h5' : 'M1 3.500h5M3.500 1v5'} stroke="#2b4a8a" /></Svg>
    </div>
  );
}

function TreeRow({ level, open, icon, text }: { level: number; open?: boolean; icon: ReactNode; text: string }) {
  const indent = ['pl-[6px]', 'pl-[9px]', 'pl-[30px]', 'pl-[55px]'][level];
  return (
    <div className={clsx('h-[18px] flex items-center', indent)}>
      {open !== undefined && <Expander open={open} />}
      {level > 0 && (
        <div className={clsx('border-t border-dotted border-[#909090] shrink-0', open !== undefined ? 'w-[7px]' : level === 3 ? 'w-3' : 'w-3 ml-1')} />
      )}
      <div className={clsx('shrink-0 flex items-center justify-center', level === 0 ? 'w-[15px] mr-[6px]' : level === 3 ? 'w-[18px] mr-1' : 'w-[18px] mr-[5px]')}>{icon}</div>
      <span className="whitespace-nowrap tracking-[-.28px]">{text}</span>
    </div>
  );
}

function Navigator() {
  return (
    <div className="h-[328px] shrink-0 flex flex-col border-b border-[#a0a0a0] pt-px">
      <PanelHeader title="Навигатор" />
      <div className="relative h-[286px] ml-[3px] mr-1 flex border-t border-l border-[#a0a0a0] overflow-hidden bg-white">
        <div className="absolute left-[13px] top-[20px] h-[262px] border-l border-dotted border-[#909090]" />
        <div className="absolute left-[34px] top-[38px] h-[28px] border-l border-dotted border-[#909090]" />
        <div className="absolute left-[55px] top-[74px] h-[10px] border-l border-dotted border-[#909090]" />
        <div className="absolute left-[34px] top-[128px] h-[137px] border-l border-dotted border-[#909090]" />
        <div className="relative w-[232px] pt-px text-[12px]">
          <TreeRow level={0} icon={<ChartsIcon />} text="Tickmill MT4" />
          <TreeRow
            level={1}
            open
            icon={<Svg w={18} h={17}><Person x={3} /><Person x={0} fill="#3fc43a" edge="#157a16" /><Person x={5.500} /></Svg>}
            text="Счета"
          />
          <TreeRow level={2} open={false} icon={<ServerIcon />} text="Tickmill-DemoUK" />
          <TreeRow level={2} open icon={<ServerIcon />} text="Tickmill-Live02" />
          <TreeRow level={3} icon={<Svg w={12} h={17}><Person /></Svg>} text="34452: Dmitriy Tydykov" />
          <TreeRow
            level={1}
            open={false}
            icon={
              <Svg w={15} h={15}>
                <path d="M.5.5h14v13H.5z" fill="#fbe48a" stroke="#c9a02c" />
                <path d="M10 3.500C7.500 2.500 7.700 5 7.200 7s-.7 4.500-2.700 3.800M5.500 6.500h4" stroke="#8a6510" strokeWidth="1.200" />
              </Svg>
            }
            text="Индикаторы"
          />
          <TreeRow level={1} open icon={<ExpertIcon />} text="Советники" />
          {['Generic A-TLP 11.94', 'Generic A-TLP 11.94.1', 'Generic A-TLP 11.94.2', 'Generic A-TLP 11.94.4', 'Generic A-TLP 11.94.9', 'Generic A-TLP v.12.39_RUS', 'MACD Sample', 'Moving Average'].map((name) => (
            <TreeRow key={name} level={2} icon={<ExpertIcon />} text={name} />
          ))}
          <TreeRow
            level={1}
            open={false}
            icon={
              <Svg w={16} h={16}>
                <path d="M1.500 1.500h10c1 0 1 2.500 0 2.500v8h2v2.500h-9V4H1.500z" fill="#f8dc7a" stroke="#a8841c" />
                <path d="M6 6h4M6 8.500h4" stroke="#a8841c" />
                <path d="M12.500 9l3 3-3 3-3-3z" fill="#e7b93a" stroke="#9a7315" />
              </Svg>
            }
            text="Скрипты"
          />
        </div>
        <Scrollbar thumb="h-[232px]" />
      </div>
      <PanelTabs active="Общие" other="Избранное" aw="w-[60px]" ow="w-[81px]" />
    </div>
  );
}

/* ---------- chart ---------- */

function Rule({ wide }: { wide?: boolean }) {
  return (
    <div className={clsx('h-3 flex items-center', wide ? 'pl-[7px]' : 'pl-[10px]')}>
      <div className={clsx('h-px bg-[#e8e8ff]', wide ? 'w-[156px]' : 'w-[153px]')} />
    </div>
  );
}

function Lines({ items, className }: { items: string[]; className: string }) {
  return (
    <div className={clsx('pl-[10px]', className)}>
      {items.map((text) => <div key={text}>{text}</div>)}
    </div>
  );
}

function InfoPanel() {
  return (
    <div className="absolute left-[3px] top-[28px] w-[170px] h-[371px] bg-[#00008b] border-r-2 border-b-2 border-[#1c1ca6] text-white text-[10px] leading-3 overflow-hidden whitespace-nowrap">
      <Rule wide />
      <div className="pl-[46px] tracking-[.35px]">GENERIC A-TLP</div>
      <Rule wide />
      <div className="pl-[10px] tracking-[.3px]">A FREE PRODUCT POWERED BY</div>
      <div className="pl-[25px] tracking-[.05px]">http://TRADELIKEAPRO.ru</div>
      <Rule wide />
      <div className="pl-[7px] tracking-[.13px]">EURAUD M15 V.12.39 OPTED (OR...</div>
      <div className="pl-[7px] tracking-[-.1px]">Set name [OK]</div>
      <Rule wide />
      <div className="pl-[55px] tracking-[.7px]">FRIDAY</div>
      <div className="pl-[10px] flex tracking-[-.3px]"><span className="w-[70px]">First Session:</span><span className="tracking-[-.4px]">00:00 - 01:00</span></div>
      <div className="pl-[10px] flex tracking-[-.4px]"><span className="w-[70px]">Second Session:</span><span className="tracking-[-.4px]">19:45 - 00:00</span></div>
      <Rule />
      <Lines className="tracking-[-.22px]" items={['Take Profit = 140.0 pips', 'Stop Loss = 96.0 pips', 'Breakeven: OFF']} />
      <Rule />
      <Lines
        className="tracking-[-.3px]"
        items={['Max Spread = 11.0 pips', 'Spread = 9.9 pips - NORMAL', 'AutoRisk - Not activated', 'Max Orders = 1', 'Trading Lots = 0.01']}
      />
      <Rule />
      <Lines
        className="tracking-[-.1px]"
        items={['1. Time Filter: ON', '2. Channel Filter: ON', '3. MA Filter: ON', '4. Partial Close: OFF', '5. CCI Filter: OFF', '6. Hard Exit Filter: OFF', '7. News Filter: OFF']}
      />
      <Rule />
    </div>
  );
}

function Chart() {
  return (
    <div className="relative h-[636px] w-[1016px] shrink-0 bg-black border-t-2 border-l-2 border-[#808080] overflow-hidden font-['DejaVu_Sans_Condensed','DejaVu_Sans',sans-serif]">
      <svg width="1014" height="634" viewBox="266 107 1014 634" className="absolute left-0 -top-px" shapeRendering="crispEdges" fontSize="10.300" fill="#fff">
        <path d="M268.500 720V108.500H1243.500V720.500H268.500" stroke="#fff" fill="none" />
        <path d="M269 301.500H1240" stroke="#e01010" strokeDasharray="9 6 3 6" />
        <path d="M269 562.500H1240" stroke="#32cd32" strokeDasharray="9 6 3 6" />
        <path d="M269 603.500H1243" stroke="#778899" />
        {blocks.map(({ x, y0, bars }) =>
          bars.map(([high, open, close, low], i) => {
            const cx = x + i * 4;
            const top = Math.round(y0 + Math.min(open, close) / 3);
            const h = Math.max(1, Math.round(Math.abs(close - open) / 3));
            return (
              <g key={cx} fill="#00ff00">
                <rect x={cx} y={Math.round(y0 + high / 3)} width="1" height={Math.round((low - high) / 3)} />
                <rect x={cx - 1} y={top} width="3" height={h} />
                {h > 2 && <rect x={cx} y={top + 1} width="1" height={h - 2} fill={close > open ? '#fff' : '#000'} />}
              </g>
            );
          }),
        )}
        {bands.map(([color, points]) => (
          <polyline key={points} points={points} fill="none" stroke={color} />
        ))}
        {prices.map(([label, y]) => (
          <g key={label}>
            <path d={`M1244 ${y + 0.5}h3`} stroke="#fff" />
            <text x="1249" y={y + 4} fontSize="9.500" textLength="30.500" lengthAdjust="spacing">{label}</text>
          </g>
        ))}
        {times.map((label, i) => (
          <g key={label}>
            <path d={`M${269.5 + i * 64} 721v3`} stroke="#fff" />
            <text x={268 + i * 64} y="733" textLength={i ? 50 : 47} lengthAdjust="spacingAndGlyphs">{label}</text>
          </g>
        ))}
        <rect x="1245" y="598" width="36" height="11" />
        <text x="1249" y="607.500" fill="#000" fontSize="9.500" textLength="30.500" lengthAdjust="spacing">1.40346</text>
        <path d="M271 115h9l-4.500 4.500z" />
        <text x="284" y="120" textLength="61" lengthAdjust="spacingAndGlyphs">EURAUD,M15</text>
        <text x="351" y="120" textLength="141" lengthAdjust="spacingAndGlyphs">1.40423 1.40535 1.40206 1.40346</text>
        <text x="1106" y="121" textLength="119" lengthAdjust="spacingAndGlyphs">Generic A-TLP v.12.39_RUS</text>
        <g shapeRendering="auto">
          <circle cx="1232.500" cy="118.500" r="5" fill="none" stroke="#fff" />
          <path d="M1230 116.500h1.500v1.500h-1.500zM1233.500 116.500h1.500v1.500h-1.500z" />
          <path d="M1229.500 119.500c1 2.500 5 2.500 6 0" fill="none" stroke="#fff" />
          <path d="M1042 109h9l-4.500 4.500z" fill="#778899" />
        </g>
        <text x="275" y="560" textLength="79" lengthAdjust="spacingAndGlyphs">#5525571 sell 0.01</text>
        <text transform="translate(1046 540) rotate(-90)" fontSize="13" fill="#dda0dd" textLength="140" lengthAdjust="spacingAndGlyphs">2. BB Channel + spread</text>
        <path d="M1037 558h2v1h1v1h1v1h1v3h-1v1h-1v1h-1v1h-2v-2h-2v-5h2z" fill="#fff" />
        <path d="M1038 560h1v1h2v3h-2v1h-1v-1h-2v-3h2z" fill="#f00" />
      </svg>
      <InfoPanel />
    </div>
  );
}

function ChartTabs() {
  const tab = 'shrink-0 text-center';
  const bar = 'w-px h-[14px] mt-[3px] shrink-0 bg-[#666]';
  return (
    <div className="h-[22px] shrink-0 flex bg-[#f0f0f0] border-t border-black text-[12px] leading-[20px] text-[#7a7a7a] tracking-[-.25px] overflow-hidden">
      <div className="w-[6px] shrink-0" />
      <div className={clsx(tab, 'w-[96px]')}>AUDNZD,M15</div><div className={bar} />
      <div className={clsx(tab, 'w-[92px]')}>EURNZD,M15</div><div className={bar} />
      <div className={clsx(tab, 'w-[94px]')}>GBPNZD,M15</div><div className={bar} />
      <div className={clsx(tab, 'w-[94px]')}>NZDCAD,M15</div><div className={bar} />
      <div className={clsx(tab, 'w-[95px]')}>NZDCHF,M15</div><div className={bar} />
      <div className={clsx(tab, 'w-[96px]')}>AUDCAD,M15</div>
      <div className={clsx(tab, 'w-[93px] h-[20px] -mt-px bg-white text-black border border-t-0 border-black')}>EURAUD,M15</div>
      <div className={clsx(tab, 'w-[91px]')}>EURCAD,M15</div><div className={bar} />
      <div className={clsx(tab, 'w-[91px]')}>EURCHF,M15</div><div className={bar} />
      <div className={clsx(tab, 'w-[95px]')}>GBPCAD,M15</div><div className={bar} />
      <div className="w-[35px] shrink-0 pl-[9px] overflow-hidden">GBPCHF,M15</div>
      <Svg w={4} h={6} className="mt-[7px] ml-[5px]"><path d="M4 0v6L0 3z" fill="#777" /></Svg>
      <Svg w={4} h={6} className="mt-[7px] ml-[15px]"><path d="M0 0v6l4-3z" fill="#000" /></Svg>
    </div>
  );
}

/* ---------- terminal ---------- */

function OrderIcon({ side }: { side: string }) {
  return (
    <Svg w={15} h={16}>
      <path d="M.5 1.500h8l3 3v10H.5z" fill="#fff" stroke="#555" />
      <path d="M8.500 1.500v3h3" stroke="#555" />
      <circle cx="10.800" cy="11.800" r="3" fill={side === 'sell' ? '#f2501e' : '#1e9bf2'} stroke={side === 'sell' ? '#9a2a08' : '#0a5a9a'} strokeWidth=".8" />
    </Svg>
  );
}

const terminalTabs: [string, string, string?][] = [
  ['Активы', 'w-[63px]'],
  ['История Счета', 'w-[102px]'],
  ['Новости', 'w-[79px]', '33'],
  ['Алерты', 'w-[62px]'],
  ['Почта', 'w-[60px]', '9'],
  ['Маркет', 'w-[73px]', '41'],
  ['Сигналы', 'w-[70px]'],
  ['Библиотека', 'w-[84px]'],
  ['Эксперты', 'w-[74px]'],
  ['Журнал', 'w-[63px]'],
];

function Terminal() {
  return (
    <div className="h-[214px] shrink-0 flex pt-[3px] border-b border-[#a0a0a0]">
      <div className="w-[13px] ml-px shrink-0 flex flex-col items-center">
        <div className="mt-px h-[14px]"><CloseX /></div>
        <div className="w-[13px] h-[194px] bg-linear-to-t from-[#bfcddb] to-[#d7e4f2] flex items-start">
          <span className="h-[192px] text-[11px] leading-[13px] tracking-[-.15px] text-[#4a5a6b] [writing-mode:vertical-rl] rotate-180 font-['DejaVu_Sans_Condensed','DejaVu_Sans',sans-serif]">Терминал</span>
        </div>
      </div>
      <div className="ml-px flex-1 min-w-0">
        <div className="h-[186px] flex border-t border-l border-[#a0a0a0] bg-white overflow-hidden text-[12px]">
          <div className="w-[1243px] shrink-0">
            <div className={clsx(orderGrid, 'h-[23px] bg-linear-to-b from-white to-[#f3f4f6] border-b border-[#d5d5d5] leading-[24px]')}>
              {orderCols.map((c, i) => (
                <div key={i} className={clsx('border-r border-[#e4e6e8] tracking-[-.1px]', i === 0 ? 'pl-[6px] flex items-center' : 'text-right pr-1')}>
                  {c}
                  {i === 0 && <Svg w={8} h={8} className="ml-2.5"><path d="M.5 7.500L4 .5" stroke="#888" /></Svg>}
                </div>
              ))}
            </div>
            <div className="h-px mt-px bg-[#b8b8b8]" />
            {orders.map((row, r) => (
              <div key={row[0]} className={clsx(orderGrid, 'h-5 leading-[18px] border-b border-[#c0c0c0]', r % 2 && 'bg-[#ebebeb]')}>
                {row.map((cell, i) => (
                  <div
                    key={i}
                    className={clsx(
                      i < 11 && 'border-r border-[#c0c0c0]',
                      i === 0 && 'flex items-center gap-[3px] pl-[3px] pb-px',
                      i === 11 && 'flex items-center justify-end gap-[10px] pr-[6px] pb-px',
                      i > 0 && i < 11 && 'text-right pr-[3px]',
                      i === 2 || i === 4 ? 'tracking-[-.2px]' : 'tracking-[-.58px]',
                    )}
                  >
                    {i === 0 && <OrderIcon side={row[2]} />}
                    {cell}
                    {i === 11 && <CloseX color="#999" weight={2.2} />}
                  </div>
                ))}
              </div>
            ))}
          </div>
          <Scrollbar thumb="h-[131px]" />
        </div>
        <div className="h-[20px] flex border-t border-black text-[12px] leading-[19px] text-[#7a7a7a] tracking-[-.15px]">
          <div className="ml-[3px] w-[72px] h-[20px] -mt-px bg-white text-black text-center border border-t-white border-black">Торговля</div>
          {terminalTabs.map(([label, w, badge]) => (
            <div key={label} className={clsx('flex items-start shrink-0', w)}>
              <div className="flex-1 flex justify-center items-baseline">
                {label}
                {badge && <span className="relative top-[3px] ml-0.5 text-[9.5px] leading-[10px] font-bold text-[#f00] tracking-[-.6px]">{badge}</span>}
              </div>
              <div className="w-px h-[14px] mt-[3px] bg-[#666]" />
            </div>
          ))}
        </div>
      </div>
    </div>
  );
}

function StatusBar() {
  const cell = 'h-3 shrink-0 border-l border-[#a0a0a0] pl-[5px]';
  return (
    <div className="h-[15px] shrink-0 flex pt-[5px] overflow-hidden text-[12px] leading-[18px] tracking-[-.45px] whitespace-nowrap">
      <div className="w-[567px] shrink-0 pl-[3px] tracking-[-.42px]">Для вызова справки нажмите F1</div>
      <div className={clsx(cell, 'w-[116px]')}>Default</div>
      <div className={clsx(cell, 'w-[102px] tracking-[-.7px]')}>2017.02.03 03:15</div>
      <div className={clsx(cell, 'w-[71px]')}>O: 1.40639</div>
      <div className={clsx(cell, 'w-[71px]')}>H: 1.40670</div>
      <div className={clsx(cell, 'w-[68px]')}>L: 1.40558</div>
      <div className={clsx(cell, 'w-[70px]')}>C: 1.40592</div>
      <div className={clsx(cell, 'w-[66px]')}>V: 4560</div>
      <div className={clsx(cell, 'w-[120px] flex gap-[3px]')}>
        <Svg w={24} h={10} className="mt-px">
          {[0, 1, 2, 3, 4, 5, 6, 7].map((i) => (
            <g key={i}>
              <rect x={i * 3} y="0" width="2" height={9 - i} fill="#5b7a1a" />
              <rect x={i * 3} y={10 - i} width="2" height={i} fill="#1c4a66" />
            </g>
          ))}
        </Svg>
        33/2 kb
      </div>
    </div>
  );
}

/* ---------- taskbar ---------- */

function TaskButton({ children, className }: { children: ReactNode; className: string }) {
  return (
    <div className={clsx('w-[43px] h-[28px] mr-[3px] rounded-[3px] border border-[#2b2f35] flex items-center justify-center shadow-[inset_0_0_0_1px_rgba(255,255,255,.45)]', className)}>
      {children}
    </div>
  );
}

const Dots = () => (
  <Svg w={9} h={21}>
    {[0, 1, 2, 3, 4, 5, 6].map((i) => (
      <path key={i} d={`M0 ${i * 3 + 0.5}h8`} stroke="#1d2126" strokeDasharray="2 1" />
    ))}
  </Svg>
);

function Taskbar() {
  return (
    <div className="relative h-[30px] shrink-0 flex items-center border-t border-[#33383f] bg-[linear-gradient(180deg,#b3c1d0_0,#8795a4_30%,#51585f_52%,#6f7173_75%,#8a8785_100%)]">
      <div className="absolute right-0 top-0 w-[500px] h-full bg-linear-to-r from-transparent to-[#23272e]/80" />
      <div className="absolute left-[8px] -top-[6px]">
        <svg width="38" height="38" viewBox="0 0 38 38">
          <defs>
            <radialGradient id="orb" cx=".5" cy=".95" r=".9">
              <stop offset="0" stopColor="#3fe0ff" />
              <stop offset=".35" stopColor="#1b86b8" />
              <stop offset=".7" stopColor="#234a6e" />
              <stop offset="1" stopColor="#8fa6bb" />
            </radialGradient>
          </defs>
          <circle cx="19" cy="19" r="17.500" fill="url(#orb)" stroke="#2b4a66" />
          <path d="M11 10c3-2 5-2 8 0l-2 8c-3-1.500-5-1.500-8 0z" fill="#f0622a" />
          <path d="M20 10.500c3 1.500 6 1.500 10-.5l-2.500 8c-3 1.500-6 1.500-9.500.3z" fill="#9ccf3a" />
          <path d="M8.800 19.500c3-1.500 5-1.500 8 0l-2 7.500c-3-1.500-5-1.500-8 0z" fill="#3fa5e6" />
          <path d="M18 20c3 1.500 6 1.500 9.300-.3L25 27.500c-3 1.500-6 1.500-9 .2z" fill="#ffd23a" />
        </svg>
      </div>
      <div className="relative w-full flex items-center">
        <div className="w-[58px] shrink-0" />
        <Dots />
        <div className="ml-[21px] w-[47px]">
          <Svg><path d="M1 1h11l5 8-5 8H1z" fill="#5fa0dc" stroke="#9cc6ee" /><path d="M3 7h2.500L9 4v10l-3.500-3H3z" fill="#fff" /><path d="M11 6c1.500 2 1.500 4 0 6" stroke="#fff" /></Svg>
        </div>
        <div className="w-[46px]">
          <Svg w={16} h={16}><path d="M0 0h16v16H0z" fill="#4f9ad8" /><circle cx="8" cy="8" r="5.800" fill="#f59a1e" stroke="#fff" strokeWidth="1.300" /><path d="M6.500 5l4.500 3-4.500 3z" fill="#fff" /></Svg>
        </div>
        <div className="relative w-[32px] h-4">
          <Svg w={16} h={16}><path d="M0 0h12l4 8-4 8H0z" fill="#f3f3f3" /></Svg>
          <span className="absolute left-[2px] top-0 text-[13px] leading-4 font-bold text-[#e0281e] font-['Liberation_Sans',sans-serif]">Я</span>
        </div>
        <TaskButton className="bg-linear-to-b from-[#e0777a] via-[#cf2a2e] to-[#e8393b]">
          <Svg w={17} h={17}><ellipse cx="8.500" cy="8.500" rx="5.500" ry="6" stroke="#e8141c" strokeWidth="4.500" /></Svg>
        </TaskButton>
        <TaskButton className="bg-linear-to-b from-[#a8b2bd] via-[#6d757d] to-[#8d9399]">
          <Svg w={16} h={16}><circle cx="8" cy="8" r="7.500" fill="#6a5aa8" /><path d="M13 5C9 1.500 3 4.500 4 9s6 5 8 3M11.500 6.500C9 4.500 6 6.500 6.500 9s3.500 2.500 4.500 1.500" stroke="#fff" strokeWidth="1.200" /></Svg>
        </TaskButton>
        <TaskButton className="bg-linear-to-b from-[#b4bdc7] via-[#848b92] to-[#a3a8ad]">
          <Svg w={18} h={16}><path d="M1 2h6l1 1.500h8V13H1z" fill="#f3d98a" stroke="#b8923c" /><path d="M2 6h14l1 8H1z" fill="#fbeebb" stroke="#c9a552" strokeWidth=".8" /><path d="M4 15v-4h9v4" stroke="#4aa0dc" strokeWidth="2" /></Svg>
        </TaskButton>
        <TaskButton className="bg-linear-to-b from-[#e3e7eb] via-[#b9bec3] to-[#d3d6d9]">
          <BrandIcon />
        </TaskButton>
        <div className="flex-1" />
        <Dots />
        <span className="ml-2 w-[32px] text-[12px] tracking-[-.3px] text-white -mt-1">EN</span>
        <Svg w={7} h={4}><path d="M0 4l3.500-4L7 4z" fill="#fff" /></Svg>
        <Svg w={16} h={16} className="ml-[13px]">
          <circle cx="8" cy="8" r="7.500" fill="#f5d71e" stroke="#5aa81a" />
          <path d="M8 4.500v7M4.500 8h7" stroke="#1f8f2a" strokeWidth="2.600" />
        </Svg>
        <Svg w={16} h={16} className="ml-[9px]">
          <path d="M5.500 3.500h9v8h-9z" fill="#4a5058" stroke="#fff" strokeWidth="1.300" />
          <path d="M7 14.500h6M10 12v2M1.500 0v3.500h3V0M3 3.500v9h2" stroke="#fff" />
        </Svg>
        <span className="ml-[30px] w-[52px] text-[12px] tracking-[-.5px] text-white">20:09</span>
        <div className="w-[15px] h-[28px] border border-[#2b2f35] bg-linear-to-b from-[#9aa5b0] to-[#3f444b] shadow-[inset_0_0_0_1px_rgba(255,255,255,.3)]" />
      </div>
    </div>
  );
}

export default function App() {
  return (
    <div className="w-[1280px] h-[1024px] overflow-hidden flex flex-col bg-[#f0f0f0] text-black font-['Open_Sans','Noto_Sans',sans-serif] leading-normal">
      <TitleBar />
      <div className="flex h-[965px] shrink-0">
        <div className="w-2 shrink-0 bg-[linear-gradient(90deg,#2b3038_0_1px,transparent_1px_6px,#59626e_6px_7px,#e4e8ec_7px),linear-gradient(180deg,#c3d0df_0,#a9b8ca_240px,#6c7f98_245px,#7d8fa6_100%)]" />
        <div className="w-[1272px] flex flex-col border-t border-[#5a6068]">
          <MenuBar />
          <MainToolbar />
          <LineToolbar />
          <div className="h-[658px] flex shrink-0">
            <div className="w-[256px] shrink-0 border-r border-[#a0a0a0]">
              <MarketWatch />
              <Navigator />
            </div>
            <div className="w-[1016px] flex flex-col">
              <Chart />
              <ChartTabs />
            </div>
          </div>
          <Terminal />
          <StatusBar />
        </div>
      </div>
      <Taskbar />
    </div>
  );
}
